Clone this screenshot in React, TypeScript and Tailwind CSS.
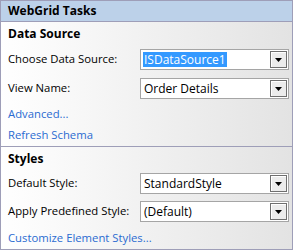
import React from "react";

type DropProps = {
  value: string;
  selected?: boolean;
};

const Dropdown = ({ value, selected }: DropProps) => (
  <div className="flex items-center w-[149px] h-[21px] bg-white border border-[#a5a5a5] pl-[2px] pr-[1px] text-[12px]">
    <div className="flex-1 min-w-0 flex items-center">
      <span
        className={
          selected
            ? "bg-[#3399ff] text-white leading-[15px] px-[1px]"
            : "text-black leading-[15px] px-[1px]"
        }
      >
        {value}
      </span>
    </div>
    <div className="w-[17px] h-[17px] border border-[#6f6f6f] bg-[#ececec] flex items-center justify-center shadow-[inset_1px_1px_0_#ffffff]">
      <svg width="7" height="4" viewBox="0 0 7 4">
        <polygon points="0,0 7,0 3.5,4" fill="#000" />
      </svg>
    </div>
  </div>
);

const Row = ({ label, children }: { label: string; children: React.ReactNode }) => (
  <div className="flex items-center justify-between h-[21px]">
    <span>{label}</span>
    {children}
  </div>
);

export default function App() {
  return (
    <div
      className="w-[293px] h-[250px] border border-[#9e9eb8] text-[11.3px] text-black overflow-hidden"
      style={{ fontFamily: '"Open Sans", "Noto Sans", sans-serif' }}
    >
      <div className="h-[21px] bg-[#bcd1e9] border-b border-[#9e9eb8] flex items-center px-[7px] font-bold text-[12px]">
        WebGrid Tasks
      </div>
      <div className="h-[227px] bg-gradient-to-r from-[#ffffff] to-[#e3e3e3] px-[7px] pr-[3px] flex flex-col">
        <div className="font-bold mt-[4px] h-[16px] leading-[16px] text-[12px]">Data Source</div>
        <div className="mt-[7px]">
          <Row label="Choose Data Source:">
            <Dropdown value="ISDataSource1" selected />
          </Row>
        </div>
        <div className="mt-[8px]">
          <Row label="View Name:">
            <Dropdown value="Order Details" />
          </Row>
        </div>
        <div className="mt-[7px] text-[#2a6bd1] h-[16px] leading-[16px]">Advanced...</div>
        <div className="mt-[5px] text-[#2a6bd1] h-[16px] leading-[16px]">Refresh Schema</div>
        <div className="mt-[3px] -mr-[3px] -ml-[7px] border-b border-[#9e9eb8]" />
        <div className="font-bold mt-[4px] h-[16px] leading-[16px] text-[12px]">Styles</div>
        <div className="mt-[6px]">
          <Row label="Default Style:">
            <Dropdown value="StandardStyle" />
          </Row>
        </div>
        <div className="mt-[7px]">
          <Row label="Apply Predefined Style:">
            <Dropdown value="(Default)" />
          </Row>
        </div>
        <div className="mt-[8px] text-[#2a6bd1] h-[16px] leading-[16px]">Customize Element Styles...</div>
      </div>
    </div>
  );
}
